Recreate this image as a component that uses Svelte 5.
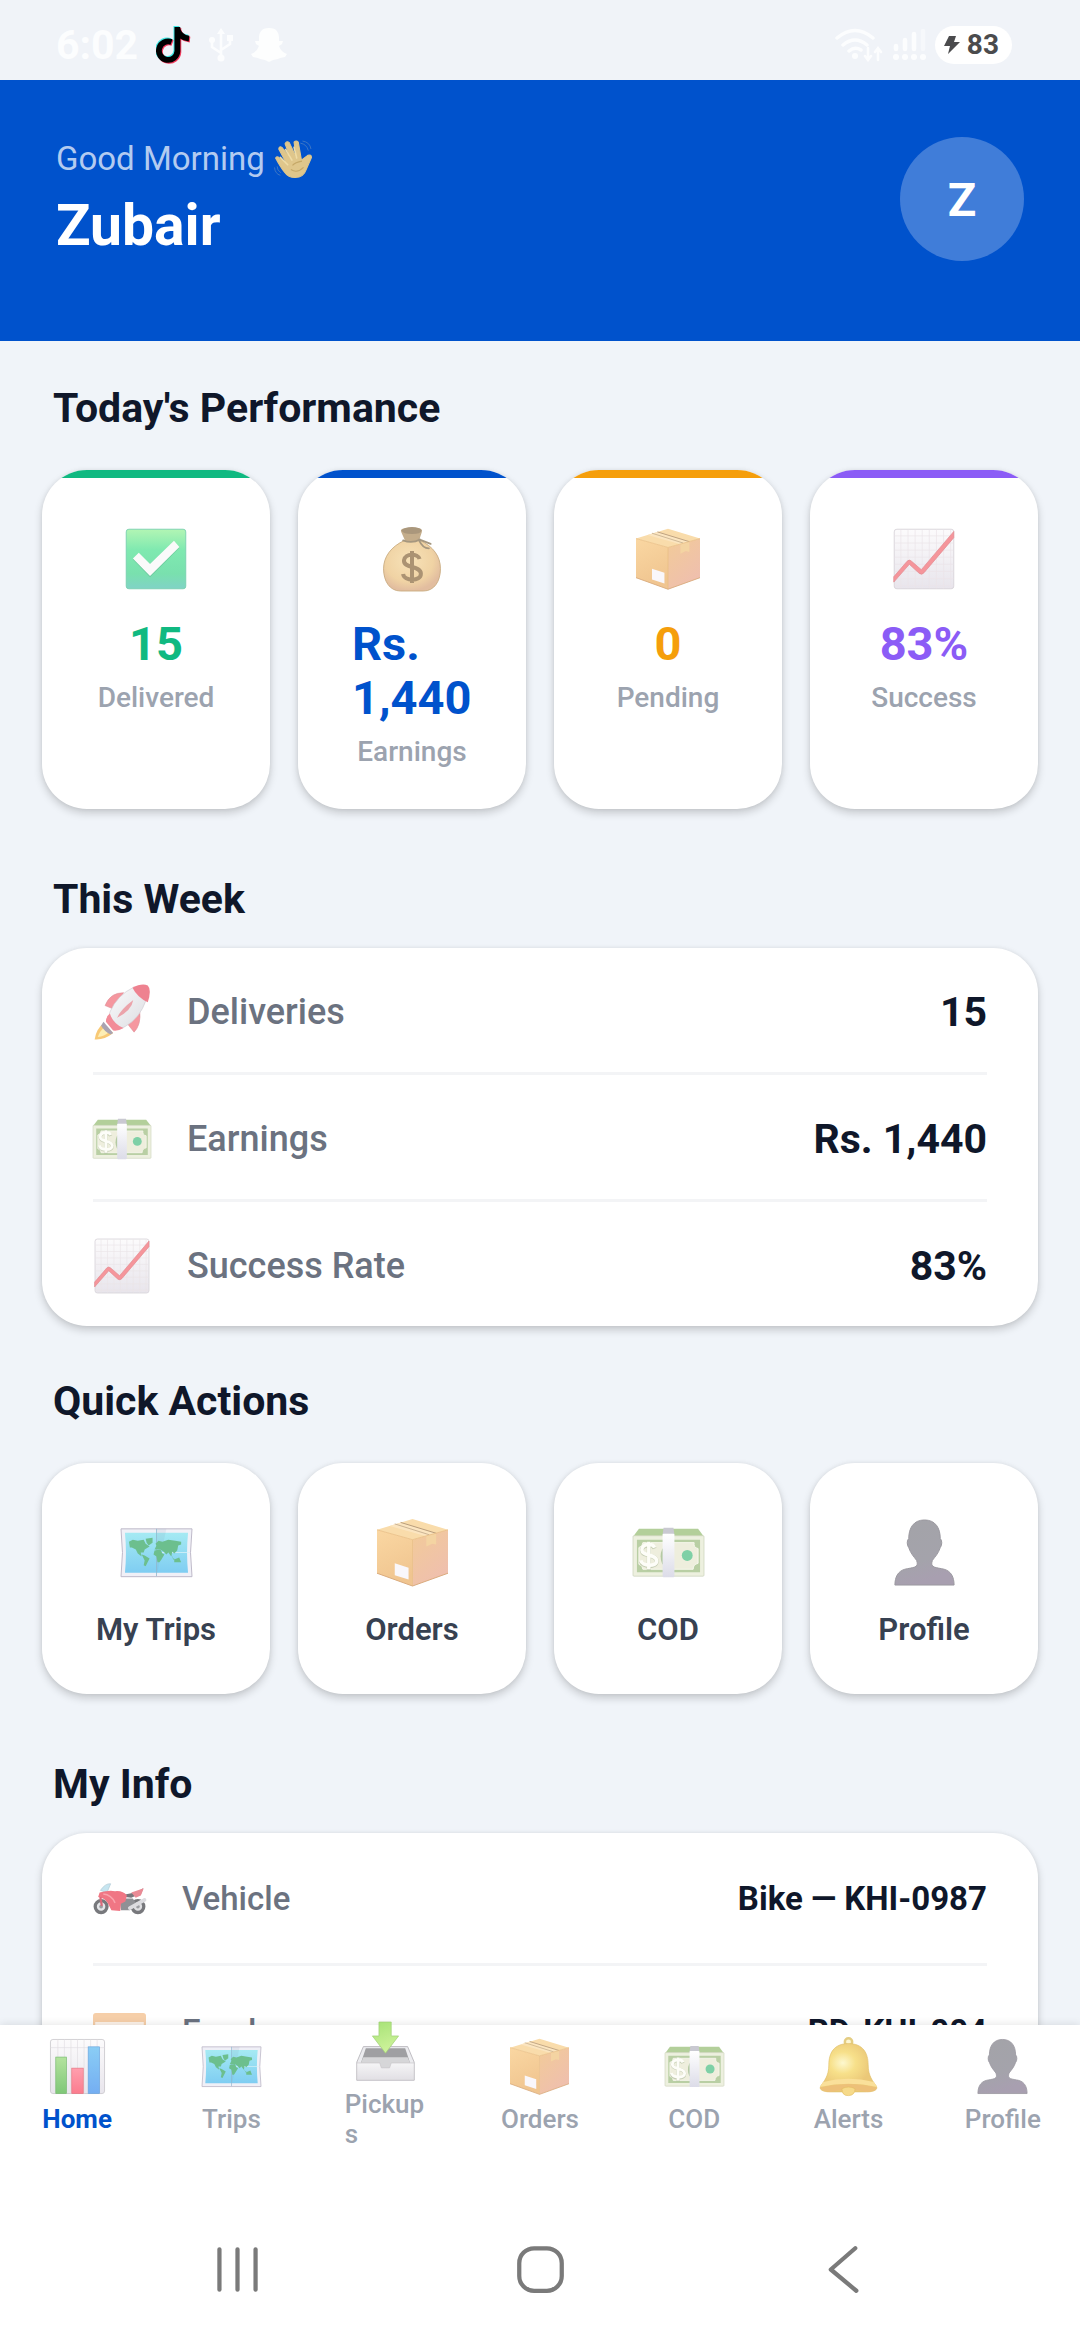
<script lang="ts">
	interface Stat {
		icon: string;
		value: string;
		label: string;
		tone: string;
	}

	interface Row {
		icon: string;
		label: string;
		value: string;
	}

	interface Link {
		icon: string;
		label: string;
	}

	const rider = 'Zubair';

	const stats: Stat[] = [
		{ icon: 'check', value: '15', label: 'Delivered', tone: 'green' },
		{ icon: 'bag', value: 'Rs. 1,440', label: 'Earnings', tone: 'blue' },
		{ icon: 'package', value: '0', label: 'Pending', tone: 'amber' },
		{ icon: 'trend', value: '83%', label: 'Success', tone: 'violet' }
	];

	const week: Row[] = [
		{ icon: 'rocket', label: 'Deliveries', value: '15' },
		{ icon: 'cash', label: 'Earnings', value: 'Rs. 1,440' },
		{ icon: 'trend', label: 'Success Rate', value: '83%' }
	];

	const actions: Link[] = [
		{ icon: 'map', label: 'My Trips' },
		{ icon: 'package', label: 'Orders' },
		{ icon: 'cash', label: 'COD' },
		{ icon: 'person', label: 'Profile' }
	];

	const info: Row[] = [
		{ icon: 'bike', label: 'Vehicle', value: 'Bike — KHI-0987' },
		{ icon: 'idcard', label: 'Employee', value: 'RD-KHI-004' }
	];

	const tabs: Link[] = [
		{ icon: 'bars', label: 'Home' },
		{ icon: 'map', label: 'Trips' },
		{ icon: 'inbox', label: 'Pickups' },
		{ icon: 'package', label: 'Orders' },
		{ icon: 'cash', label: 'COD' },
		{ icon: 'bell', label: 'Alerts' },
		{ icon: 'person', label: 'Profile' }
	];

	let active = $state('Home');
</script>

{#snippet icon(name: string)}
	<svg class="icon" viewBox="0 0 72 72" aria-hidden="true">
		{#if name === 'check'}
			<rect x="2.5" y="2.5" width="67" height="67" rx="3" fill="url(#g-check)" stroke="#77cfae" />
			<path d="M10 36.500 16.600 30 29.300 42.500 56.200 16.500 62.300 23.500 29.300 56.500Z" fill="#5aa887" opacity="0.4" />
			<path d="M10 35.500 16.600 29 29.300 41.500 56.200 15.500 62.300 22.500 29.300 55Z" fill="#fafafa" />
		{:else if name === 'bag'}
			<path d="M28 15C12 22 4 34 4 47c0 14 7 25 19 25h26c12 0 19-11 19-25 0-14-8-25-23-32Z" fill="url(#g-bag)" stroke="#c9ab80" />
			<path d="M28 15 24 6Q22 2 28 1.500 36 0 44 1.500 48 2 47 6L44 15Q36 18 28 15Z" fill="#c4ad8b" />
			<path d="M24 4Q27 0 36 0T47 4Q46 8 36 8T24 4Z" fill="#aa977c" />
			<path d="M26 15Q36 19 45 14M44 14 57 19M44 15Q48 24 55 24" fill="none" stroke="#a5977f" stroke-width="2" stroke-linecap="round" />
			<path d="M44.500 36C43 30 28 29 27 37.500 26 47 46 43 46 52.500 46 62 27 61 26 53M36 27V63" fill="none" stroke="#ab9373" stroke-width="4.500" />
		{:else if name === 'package'}
			<path d="M36 2 72 13 36 23 0 13Z" fill="#f9dcab" />
			<path d="M0 13 36 23V70L0 57Z" fill="url(#g-box-left)" />
			<path d="M72 13 36 23V70L72 57Z" fill="url(#g-box-right)" />
			<path d="M13 9 24 5.500 60 16.500 50 19.500Z" fill="#fbe5c0" />
			<path d="M18 7 53 18" stroke="#c9b292" stroke-width="1" />
			<path d="M24 5.500 60 16.500" stroke="#b79b7b" stroke-width="1" />
			<path d="M50 19.500 60 16.500V28L56 27 50 30Z" fill="#f4d4a2" />
			<path d="M0 13 36 23 72 13M36 23V70" fill="none" stroke="#e8bd82" stroke-width="0.800" />
			<path d="M18 47 32 51.500V63.500L18 59Z" fill="#f9f7fb" />
			<path d="M0 57 36 70 72 57" fill="none" stroke="#d9aa7c" />
		{:else if name === 'trend'}
			<rect x="2.500" y="2.500" width="67" height="67" rx="3" fill="url(#g-paper)" stroke="#d6d2d8" />
			<path d="M10 3V69M18 3V69M26 3V69M34 3V69M42 3V69M50 3V69M58 3V69M66 3V69M3 10H69M3 18H69M3 26H69M3 34H69M3 42H69M3 50H69M3 58H69M3 66H69" stroke="#ebe4e8" stroke-width="0.800" />
			<path d="M2 56 17 38.500Q19.400 36 22 38.500L33 48 69.500 5V12L36 51.500Q33.500 54.500 30.500 52L19.500 42 2 62Z" fill="#f5959b" stroke="#e28a90" stroke-width="0.800" />
		{:else if name === 'rocket'}
			<path d="M13 50Q4 57 2 70 14 71 25 62Z" fill="#f8c976" />
			<path d="M15 54Q8 60 6 67 14 66 20 61Z" fill="#fdeeb4" />
			<path d="M38 12Q21 12 15 28L27 33Z" fill="#f5979f" stroke="#db8d95" stroke-width="0.700" />
			<path d="M58 34Q60 52 51 61L43 51Z" fill="#f5979f" stroke="#db8d95" stroke-width="0.700" />
			<path d="M13 48 25 62 22 64Q14 60 10 53Z" fill="#a9a3b1" />
			<path d="M51 5Q30 15 21 36L20 41 34 57 40 54Q58 44 66 21Z" fill="url(#g-rocket)" stroke="#cfccd2" stroke-width="0.800" />
			<path d="M21 38Q16 42 16 48L25 59Q31 60 38 56 25 51 21 38Z" fill="#f28c98" />
			<path d="M49 6Q60 0 68 3 73 8 68 24 55 18 49 6Z" fill="#ee8290" />
			<path d="M30 43Q34 33 50 21 48 34 30 43Z" fill="#eba3aa" />
		{:else if name === 'cash'}
			<path d="M6 12H66L72 20H0Z" fill="#b3cf9a" />
			<rect y="19" width="72" height="41" rx="1" fill="#edf0df" stroke="#cfd6bf" stroke-width="0.800" />
			<path d="M4 23H68V56H4Z" fill="#b9cfa4" />
			<path d="M10 26H62Q61 31 66 32V47Q61 48 61 53H10Q10 49 6 48V31Q10 30 10 26Z" fill="#eeeedd" stroke="#f7f7ed" />
			<circle cx="55" cy="39" r="5.500" fill="#7ed0a6" />
			<ellipse cx="33" cy="40" rx="5" ry="10" fill="#b4c9a3" />
			<path d="M22 32C20 27 9 28 9 34 9 41 24 37 24 45 24 52 9 51 8 45M16 25V54" fill="none" stroke="#9fb08d" stroke-width="4" opacity="0.500" />
			<path d="M22 31C20 26 9 27 9 33.500 9 40 24 37 24 44.500 24 51 9 50 8 44M16 25V53" fill="none" stroke="#fdfdf8" stroke-width="3.500" />
			<path d="M31 11H41L42 18H30Z" fill="#c9c9d1" />
			<rect x="30" y="17" width="12" height="44" rx="1" fill="url(#g-band)" />
		{:else if name === 'map'}
			<path d="M0 12H72Q69 36 72 60.500H0Q3 36 0 12Z" fill="#f0f0f7" stroke="#bdb8c8" stroke-width="1" />
			<path d="M4 16H68Q66 36 68 56.500H4Q6 36 4 16Z" fill="url(#g-sea)" />
			<path d="M36 12H46L36 60Z" fill="#7d91b0" opacity="0.120" />
			<path d="M36 12V60" stroke="#8fb7cf" stroke-width="0.800" />
			<path d="M36 36H70" stroke="#d8f1f8" stroke-width="0.800" />
			<g fill="#6cbf8e">
				<path d="M8 25 12 23 17 24 23 23 25 27 29 30 24 33 23 36 20 36 21 40 17 37 15 33 11 31 9 31Z" />
				<path d="M25 22 32 21 32 26 28 29 26 26Z" />
				<path d="M21 38 24 39 29 42 27 46 25 50 23 49 24 44Z" />
				<path d="M34 34 40 33 42 37 44 38 41 43 39 46 37 46 36 40 33 38Z" />
				<path d="M34 33 36 29 35 27 38 24 42 25 48 23 55 24 61 25 61 28 58 29 57 34 54 37 52 35 51 40 48 36 46 38 43 35 40 33Z" />
				<path d="M51 38 53 42 56 43 53 43Z" />
				<path d="M54 43 59 41 61 46 58 46 54 46Z" />
			</g>
		{:else if name === 'person'}
			<path d="M36 3C25 3 20 11 20 22 18 23 18 29 20 31 22 37 25 40 28 44 31 52 24 51 16 53 9 55 6 61 6 69H66C66 61 63 55 56 53 48 51 41 52 44 44 47 40 50 37 52 31 54 29 54 23 52 22 52 11 47 3 36 3Z" fill="url(#g-person)" stroke="#9a98a0" stroke-width="1" />
		{:else if name === 'bike'}
			<circle cx="11" cy="47" r="8" fill="#e4e5e8" stroke="#77787c" stroke-width="4.500" />
			<circle cx="61" cy="47" r="8" fill="#dfdfe2" stroke="#77787c" stroke-width="4.500" />
			<circle cx="11" cy="47" r="2.500" fill="#9c9da2" />
			<circle cx="61" cy="47" r="2.500" fill="#9c9da2" />
			<path d="M36 36H54L60 44 50 52H38Z" fill="#8f9095" />
			<path d="M42 31 60 27 68 22 66 29 52 35 44 34Z" fill="#77767c" />
			<path d="M10 25Q17 15 24 16L19 28Z" fill="#c6e5f0" stroke="#a9c3cf" stroke-width="0.800" />
			<path d="M9 28Q22 24 30 26 41 25 46 32L44 40 38 43 37 53 25 52 20 42Q15 35 7 34Z" fill="#f07684" />
			<path d="M52 28 69 22 65 32 58 35Z" fill="#e98a95" />
			<path d="M50 49 70 38" stroke="#dcdce0" stroke-width="5" stroke-linecap="round" />
			<path d="M10 34 12 46" stroke="#d9697a" stroke-width="3" />
			<path d="M14 30Q25 31 30 42" fill="none" stroke="#f9a3ac" stroke-width="2" />
		{:else if name === 'idcard'}
			<rect x="0" y="11" width="72" height="50" rx="4" fill="#f6cfa9" />
			<path d="M3 23H69V55Q69 58 66 58H6Q3 58 3 55Z" fill="#fdf3ea" />
		{:else if name === 'bars'}
			<rect x="3" y="3" width="66" height="66" rx="3" fill="url(#g-paper)" stroke="#c9c6cc" />
			<path d="M12 3V69M20 3V69M28 3V69M36 3V69M44 3V69M52 3V69M60 3V69M3 13H69" stroke="#e1dde2" stroke-width="0.800" />
			<rect x="9.500" y="24.500" width="13" height="44.500" fill="url(#g-green)" stroke="#75b96e" stroke-width="0.800" />
			<rect x="29" y="38" width="14" height="31" fill="url(#g-pink)" stroke="#e5737f" stroke-width="0.800" />
			<rect x="49" y="12" width="14" height="57" fill="url(#g-blue)" stroke="#6aa5dd" stroke-width="0.800" />
		{:else if name === 'inbox'}
			<path d="M9 30H63L71 49V71H1V49Z" fill="#ececef" stroke="#b3b1b7" />
			<path d="M12 32H60L66 50H6Z" fill="#9f9fa2" />
			<path d="M9 43H63L66 50H44L42 57H30L28 50H6Z" fill="#d6d6d8" />
			<path d="M1 50H29L31 56H41L43 50H71V71H1Z" fill="url(#g-tray)" stroke="#c7c5ca" stroke-width="0.800" />
			<path d="M28 0H43V17H52L36 38 20 17H28Z" fill="url(#g-arrow)" stroke="#9ccd73" stroke-width="0.800" />
		{:else if name === 'bell'}
			<circle cx="36" cy="6" r="4.500" fill="#fdf6d2" stroke="#e4cd83" stroke-width="3" />
			<path d="M36 8C18 8 12 20 12 34 12 48 6 54 2 60 0 64 4 67 14 67H58C68 67 72 64 70 60 66 54 60 48 60 34 60 20 54 8 36 8Z" fill="url(#g-bell)" stroke="#e0c06a" stroke-width="0.800" />
			<path d="M5 55Q36 47 67 55L71 61Q36 53 1 61Z" fill="#fae09a" />
			<path d="M1 62Q36 53 71 62 68 67 58 67 36 62 14 67 4 67 1 62Z" fill="#edc079" />
			<path d="M28 63Q36 59 44 63 44 71 36 71.500T28 63Z" fill="#f6da8a" stroke="#e3bd62" stroke-width="0.800" />
		{:else if name === 'wave'}
			<path d="M3 34Q6 30 10 34L24 45 9 17Q10 11 15 14L31 34 21 7Q24 1 29 5L42 32 38 4Q42 0 46 4L52 38 64 29Q71 27 71 33L61 56Q56 71 40 71 27 71 20 61 12 51 3 34Z" fill="#dfc68b" stroke="#dfc68b" stroke-width="2" stroke-linejoin="round" />
			<path d="M26 47 12 33M34 38 22 18M43 34 38 14" stroke="#efdca6" stroke-width="3" stroke-linecap="round" />
			<path d="M35 48Q40 42 53 40M32 56Q44 64 56 52" fill="none" stroke="#c5a867" stroke-width="2" />
			<path d="M50 6Q62 8 65 20M54 2Q68 4 70 17M1 52Q2 64 12 67M6 50Q6 58 13 62" fill="none" stroke="#4b7fc4" stroke-width="1.500" />
		{/if}
	</svg>
{/snippet}

<!-- shared gradients for the icon set -->
<svg class="defs" width="0" height="0" aria-hidden="true">
	<defs>
		<linearGradient id="g-check" x2="0" y2="1">
			<stop offset="0" stop-color="#b2f5b4" />
			<stop offset="0.35" stop-color="#7fe9b0" />
			<stop offset="0.75" stop-color="#79e0ae" />
			<stop offset="1" stop-color="#80d3c6" />
		</linearGradient>
		<radialGradient id="g-bag" cx="0.45" cy="0.4" r="0.6">
			<stop offset="0" stop-color="#f7e2b8" />
			<stop offset="0.7" stop-color="#f0d3a4" />
			<stop offset="1" stop-color="#e2bd9f" />
		</radialGradient>
		<linearGradient id="g-box-left" x2="0.3" y2="1">
			<stop offset="0" stop-color="#fad7a2" />
			<stop offset="1" stop-color="#f0c590" />
		</linearGradient>
		<linearGradient id="g-box-right" x2="0.6" y2="1">
			<stop offset="0" stop-color="#f2cb98" />
			<stop offset="1" stop-color="#efbfae" />
		</linearGradient>
		<linearGradient id="g-paper" x2="0" y2="1">
			<stop offset="0" stop-color="#fcfbfc" />
			<stop offset="1" stop-color="#e8e5ec" />
		</linearGradient>
		<linearGradient id="g-rocket" x2="1" y2="1">
			<stop offset="0" stop-color="#fbfbfc" />
			<stop offset="1" stop-color="#dcdde1" />
		</linearGradient>
		<linearGradient id="g-band" x2="0" y2="1">
			<stop offset="0" stop-color="#ffffff" />
			<stop offset="1" stop-color="#dcdce8" />
		</linearGradient>
		<linearGradient id="g-sea" x2="0" y2="1">
			<stop offset="0" stop-color="#a5eaf3" />
			<stop offset="1" stop-color="#7fcdf2" />
		</linearGradient>
		<linearGradient id="g-person" x2="0.3" y2="1">
			<stop offset="0" stop-color="#a3a3a8" />
			<stop offset="0.7" stop-color="#a4a3ab" />
			<stop offset="1" stop-color="#a89fb0" />
		</linearGradient>
		<linearGradient id="g-green" x2="0" y2="1">
			<stop offset="0" stop-color="#b4e39e" />
			<stop offset="1" stop-color="#7fc778" />
		</linearGradient>
		<linearGradient id="g-pink" x2="0" y2="1">
			<stop offset="0" stop-color="#ff9fae" />
			<stop offset="1" stop-color="#fb7c8e" />
		</linearGradient>
		<linearGradient id="g-blue" x2="0" y2="1">
			<stop offset="0" stop-color="#8acdf5" />
			<stop offset="1" stop-color="#74aef2" />
		</linearGradient>
		<linearGradient id="g-tray" x2="0" y2="1">
			<stop offset="0" stop-color="#f5f5f6" />
			<stop offset="1" stop-color="#e1dfe4" />
		</linearGradient>
		<linearGradient id="g-arrow" x2="0.3" y2="1">
			<stop offset="0" stop-color="#a6e276" />
			<stop offset="1" stop-color="#cdf29a" />
		</linearGradient>
		<radialGradient id="g-bell" cx="0.4" cy="0.4">
			<stop offset="0" stop-color="#fdf8cf" />
			<stop offset="0.45" stop-color="#f7e08a" />
			<stop offset="1" stop-color="#ebc878" />
		</radialGradient>
	</defs>
</svg>

<div class="screen">
	<div class="status-bar">
		<div class="status-group">
			<span class="clock">6:02</span>
			<svg class="tiktok" viewBox="0 0 36 42" aria-hidden="true">
				<g fill="none" stroke-width="6">
					<path d="M15 17.500A9.500 9.500 0 1 0 21 27V2M21 4Q23 13 33 14" stroke="#3ee8e4" />
					<path d="M17 19.500A9.500 9.500 0 1 0 23 29V4M23 6Q25 15 35 16" stroke="#f43a5e" />
					<path d="M16 18.500A9.500 9.500 0 1 0 22 28V3M22 5Q24 14 34 15" stroke="#000000" />
				</g>
			</svg>
			<svg class="usb" viewBox="0 0 24 34" aria-hidden="true">
				<path d="M12 4V30M12 25 3 19V13M12 22 21 16V10" fill="none" stroke="#fcfdfe" stroke-width="2.500" />
				<path d="M12 0 16 6H8Z" fill="#fcfdfe" />
				<circle cx="12" cy="30" r="3.500" fill="#fcfdfe" />
				<circle cx="3" cy="12" r="3" fill="#fcfdfe" />
				<rect x="18" y="7" width="6" height="6" fill="#fcfdfe" />
			</svg>
			<svg class="ghost" viewBox="0 0 36 34" aria-hidden="true">
				<path d="M18 0C10 0 8 5 8 10V13L4 13 5 16 8 18Q6 24 0 26L2 29 7 30 9 31 14 32 18 34 22 32 27 31 29 30 34 29 36 26Q30 24 28 18L31 16 32 13 28 13V10C28 5 26 0 18 0Z" fill="#fdfefe" />
			</svg>
		</div>
		<div class="status-group right">
			<svg class="wifi" viewBox="0 0 48 34" aria-hidden="true">
				<g fill="none" stroke="#fcfdfe" stroke-width="3.500" stroke-linecap="round">
					<path d="M2 10Q20-5 38 10M8 17Q20 7 32 17M14 23Q20 18 26 22" />
					<path d="M33 20V31M30 28 33 32 36 28M43 32V20M40 24 43 20 46 24" stroke-width="2.500" />
				</g>
				<circle cx="20" cy="28" r="3" fill="#fcfdfe" />
			</svg>
			<svg class="signal" viewBox="0 0 34 32" aria-hidden="true">
				<g stroke="#fcfdfe" stroke-width="4.500" stroke-linecap="round">
					<path d="M4 17V20M13 11V20M22 5V20" />
					<path d="M31 2V20" opacity="0.500" />
				</g>
				<g fill="#fcfdfe">
					<circle cx="4" cy="28" r="3" />
					<circle cx="13" cy="28" r="3" />
					<circle cx="22" cy="28" r="3" />
					<circle cx="31" cy="28" r="3" />
				</g>
			</svg>
			<span class="battery">
				<svg class="bolt" viewBox="0 0 16 18" aria-hidden="true">
					<path d="M5 0H12L10 6H16L4 18 6 10H0Z" fill="#4b4b4d" />
				</svg>
				83
			</span>
		</div>
	</div>

	<header class="hero">
		<div>
			<p class="greeting">Good Morning {@render icon('wave')}</p>
			<h1 class="rider">{rider}</h1>
		</div>
		<button class="avatar" aria-label="Open profile">{rider[0]}</button>
	</header>

	<main class="content">
		<section class="grid-section">
			<h2>Today's Performance</h2>
			<div class="grid">
				{#each stats as stat}
					<div class="card stat {stat.tone}">
						<div class="stat-bar"></div>
						<div class="stat-body">
							{@render icon(stat.icon)}
							<strong class="stat-value">{stat.value}</strong>
							<span class="stat-label">{stat.label}</span>
						</div>
					</div>
				{/each}
			</div>
		</section>

		<section class="list-section">
			<h2>This Week</h2>
			<div class="card list week">
				{#each week as row}
					<div class="row">
						{@render icon(row.icon)}
						<span class="row-label">{row.label}</span>
						<strong class="row-value">{row.value}</strong>
					</div>
				{/each}
			</div>
		</section>

		<section class="grid-section">
			<h2>Quick Actions</h2>
			<div class="grid">
				{#each actions as action}
					<button class="card action">
						{@render icon(action.icon)}
						<span>{action.label}</span>
					</button>
				{/each}
			</div>
		</section>

		<section class="list-section">
			<h2>My Info</h2>
			<div class="card list info">
				{#each info as row}
					<div class="row">
						{@render icon(row.icon)}
						<span class="row-label">{row.label}</span>
						<strong class="row-value">{row.value}</strong>
					</div>
				{/each}
			</div>
		</section>
	</main>

	<footer class="bottom">
		<nav class="tabs">
			{#each tabs as tab}
				<button class="tab" class:active={tab.label === active} onclick={() => (active = tab.label)}>
					{@render icon(tab.icon)}
					<span class="tab-label">{tab.label}</span>
				</button>
			{/each}
		</nav>

		<div class="system-nav">
			<button aria-label="Recent apps">
				<svg class="system-icon" viewBox="0 0 48 48" aria-hidden="true">
					<path d="M7 5V43M24 5V43M41 5V43" />
				</svg>
			</button>
			<button aria-label="Home screen">
				<svg class="system-icon" viewBox="0 0 48 48" aria-hidden="true">
					<rect x="4" y="4" width="40" height="40" rx="14" />
				</svg>
			</button>
			<button aria-label="Back">
				<svg class="system-icon" viewBox="0 0 48 48" aria-hidden="true">
					<path d="M36 4 13 24 37 44" />
				</svg>
			</button>
		</div>
	</footer>
</div>

<style>
	:global(body) {
		background: #f0f4f9;
	}

	.defs {
		display: block;
	}

	.screen {
		display: flex;
		flex-direction: column;
		height: 100vh;
		background: #f0f4f9;
		color: #0f172a;
		font-family: Roboto, "Noto Sans", sans-serif;
	}

	button {
		margin: 0;
		padding: 0;
		border: 0;
		background: none;
		color: inherit;
		font: inherit;
	}

	.icon {
		display: block;
		flex-shrink: 0;
		width: var(--icon);
		height: var(--icon);
		overflow: visible;
	}

	/* Status bar */
	.status-bar {
		display: flex;
		flex-shrink: 0;
		align-items: center;
		justify-content: space-between;
		height: 80px;
		padding: 9px 68px 0 56px;
		box-sizing: border-box;
		background: #f0f3f8;
		color: #fcfdfe;
	}

	.status-group {
		display: flex;
		align-items: center;
		gap: 18px;
	}

	.status-group.right {
		gap: 9px;
	}

	.clock {
		font-size: 41px;
		font-weight: 700;
	}

	.tiktok {
		width: 35px;
		height: 41px;
	}

	.usb {
		width: 24px;
		height: 34px;
	}

	.ghost {
		width: 36px;
		height: 34px;
	}

	.wifi {
		width: 48px;
		height: 34px;
	}

	.signal {
		width: 34px;
		height: 32px;
	}

	.battery {
		display: flex;
		align-items: center;
		gap: 7px;
		height: 38px;
		padding: 0 13px 0 9px;
		border-radius: 19px;
		background: #ffffff;
		color: #4b4b4d;
		font-size: 28px;
		font-weight: 700;
	}

	.bolt {
		width: 16px;
		height: 18px;
	}

	/* Header */
	.hero {
		display: flex;
		flex-shrink: 0;
		align-items: center;
		justify-content: space-between;
		padding: 57px 56px 80px;
		background: #0052cc;
		color: #ffffff;
	}

	.greeting {
		--icon: 38px;
		display: flex;
		align-items: center;
		gap: 9px;
		margin: 0 0 14px;
		color: #b3cbf0;
		font-size: 33px;
		line-height: 40px;
	}

	.rider {
		margin: 0;
		font-size: 57px;
		font-weight: 700;
		line-height: 66px;
	}

	.avatar {
		width: 124px;
		height: 124px;
		border-radius: 50%;
		background: #407dd9;
		font-size: 47px;
		font-weight: 700;
	}

	/* Content */
	.content {
		flex: 1;
		min-height: 0;
		padding: 41px 42px 0;
		overflow: hidden;
	}

	h2 {
		margin: 0;
		padding-left: 11px;
		font-size: 41px;
		font-weight: 700;
		line-height: 52px;
	}

	.card {
		border-radius: 45px;
		background: #ffffff;
		box-shadow: 0 4px 8px rgba(0, 0, 0, 0.18), 0 0 4px rgba(0, 0, 0, 0.06);
	}

	.grid-section {
		margin-bottom: 64px;
	}

	.list-section {
		margin-bottom: 49px;
	}

	.grid {
		display: grid;
		grid-template-columns: repeat(4, minmax(0, 1fr));
		gap: 28px;
		margin-top: 36px;
	}

	.stat {
		--icon: 64px;
		overflow: hidden;
	}

	.stat-bar {
		height: 8px;
		background: var(--tone);
	}

	.stat-body {
		display: flex;
		flex-direction: column;
		align-items: center;
		padding: 49px 54px 40px;
	}

	.stat-value {
		margin: 26px 0 10px;
		color: var(--tone);
		font-size: 47px;
		font-weight: 700;
		line-height: 54px;
	}

	.stat-label {
		color: #9ca3af;
		font-size: 28px;
		font-weight: 500;
		line-height: 34px;
	}

	.green {
		--tone: #10b981;
	}

	.blue {
		--tone: #0052cc;
	}

	.amber {
		--tone: #f59e0b;
	}

	.violet {
		--tone: #8b5cf6;
	}

	.list {
		margin-top: 23px;
		padding: 0 51px;
	}

	.row {
		display: flex;
		align-items: center;
		gap: 36px;
		border-bottom: 3px solid #f3f4f6;
	}

	.row:last-child {
		border-bottom: 0;
	}

	.row-label {
		flex: 1;
		color: #6b7280;
		font-weight: 500;
	}

	.week {
		--icon: 58px;
	}

	.week .row {
		height: 120px;
		padding-top: 4px;
	}

	.week .row-label {
		font-size: 36px;
	}

	.week .row-value {
		font-size: 41px;
		font-weight: 700;
	}

	.info {
		--icon: 53px;
	}

	.info .row {
		height: 130px;
	}

	.info .row-label,
	.info .row-value {
		font-size: 33px;
	}

	.info .row-value {
		font-weight: 700;
	}

	.action {
		--icon: 71px;
		display: flex;
		flex-direction: column;
		align-items: center;
		gap: 24px;
		padding: 54px 0 46px;
		color: #374151;
		font-size: 31px;
		font-weight: 600;
		line-height: 36px;
	}

	/* Bottom navigation */
	.bottom {
		position: relative;
		flex-shrink: 0;
		background: #ffffff;
		box-shadow: 0 -1px 8px rgba(0, 0, 0, 0.1);
	}

	.tabs {
		--icon: 59px;
		display: grid;
		grid-template-columns: repeat(7, minmax(0, 1fr));
	}

	.tab {
		display: flex;
		flex-direction: column;
		align-items: center;
		justify-content: center;
		gap: 8px;
		height: 120px;
		color: #9ca3af;
		font-size: 26px;
		font-weight: 500;
		line-height: 30px;
	}

	.tab-label {
		max-width: 82px;
		overflow-wrap: anywhere;
		text-align: left;
	}

	.tab.active {
		color: #0052cc;
		font-weight: 700;
	}

	.system-nav {
		display: grid;
		grid-template-columns: repeat(3, minmax(0, 1fr));
		padding: 99px 8% 45px;
	}

	.system-nav button {
		display: flex;
		justify-content: center;
	}

	.system-icon {
		width: 51px;
		height: 51px;
		fill: none;
		stroke: #7a7a7a;
		stroke-width: 4;
		stroke-linecap: round;
		stroke-linejoin: round;
	}
</style>
